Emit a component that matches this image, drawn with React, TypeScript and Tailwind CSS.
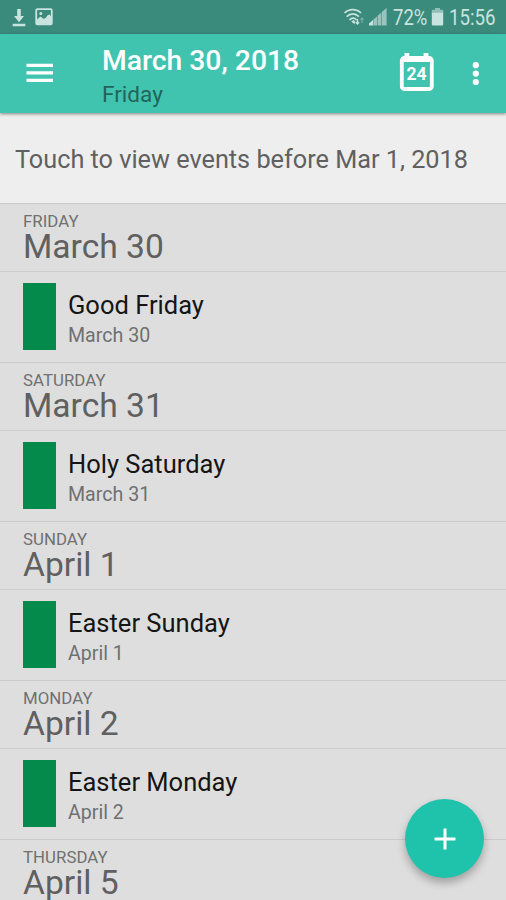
import React from "react";

const days = [
  { weekday: "FRIDAY", date: "March 30", event: "Good Friday" },
  { weekday: "SATURDAY", date: "March 31", event: "Holy Saturday" },
  { weekday: "SUNDAY", date: "April 1", event: "Easter Sunday" },
  { weekday: "MONDAY", date: "April 2", event: "Easter Monday" },
  { weekday: "THURSDAY", date: "April 5", event: "" },
];

function StatusBar() {
  return (
    <div className="flex h-[34px] shrink-0 items-center bg-[#3b8b7d] text-[#c9e3de]">
      <svg className="mt-px ml-3 h-[18px] w-[14px]" viewBox="0 0 14 18" fill="currentColor">
        <path d="M5.2 0h3.6v7H12l-5 6.2L2 7h3.2zM.7 14.8h12.6v2.4H.7z" />
      </svg>
      <svg className="ml-[9px] h-[18px] w-[18px]" viewBox="0 0 18 18">
        <rect x="1.2" y="1.2" width="15.6" height="15.2" rx="1.2" fill="none" stroke="currentColor" strokeWidth="1.8" />
        <path d="M2 11.4l3.4-2.8 3 2.2 2-.6 2.2-3 2-.6 2 2.4v7.2H2z" fill="currentColor" />
        <circle cx="5.8" cy="5.4" r="1.5" fill="currentColor" />
      </svg>
      <svg className="ml-[290px] h-[18px] w-[22px]" viewBox="0 0 22 18" fill="none" stroke="currentColor" strokeWidth="1.7">
        <path d="M1.5 5C6 .4 13.5 .4 18 5M3.7 8.7c3.6-3.8 8.6-3.8 12.2 0M6.5 12c2.2-2.4 5-2.4 7 0" />
        <path d="M10.4 12l-2 1.6 3 2.6 1-2.4z" fill="currentColor" stroke="none" />
        <path d="M14.5 11v5m-1.6-1.7l1.6 1.7 1.6-1.7" strokeWidth="1.4" />
        <path d="M19 15v-5m-1.6 1.7L19 10l1.6 1.7" strokeWidth="1.1" opacity=".45" />
      </svg>
      <svg className="ml-[4px] h-[18px] w-[18px]" viewBox="0 0 18 18" fill="currentColor">
        <path d="M0 17.5v-2l4-3.6v5.6z" />
        <path d="M4.4 11.4L8 8.4v9.1H4.4zM8.6 7.8l3.8-3.3v13H8.6zM13 3.8L17.6 0v17.5H13z" opacity=".65" />
      </svg>
      <span className="ml-[6px] w-[36px] origin-left scale-x-[.86] pt-[2px] text-[21.5px] leading-[32px] whitespace-nowrap">72%</span>
      <svg className="ml-[2px] h-[18px] w-[13px]" viewBox="0 0 13 18" fill="currentColor">
        <path d="M4 0h5v1.8h3.2v3.4H.8V1.8H4z" opacity=".6" />
        <path d="M.8 4.7h11.4v11.8q0 1-1 1H1.8q-1 0-1-1z" />
      </svg>
      <span className="ml-[5px] w-[48px] origin-left scale-x-[.87] pt-[2px] text-[21.5px] leading-[32px] whitespace-nowrap">15:56</span>
    </div>
  );
}

function AppBar() {
  return (
    <div className="z-10 flex h-[79px] shrink-0 bg-[#40c4b0] shadow-[0_1px_3px_rgba(0,0,0,0.45)]">
      <svg className="mt-[28px] ml-[26px] h-[22px] w-[28px]" viewBox="0 0 28 22" fill="white">
        <path d="M.5 1.7h26.5v3.2H.5zM.5 9.2h26.5v3.2H.5zM.5 16.8h26.5V20H.5z" />
      </svg>
      <div className="ml-[48px] w-[294px]">
        <h1 className="mt-[11px] text-[28.3px] leading-[32px] font-medium whitespace-nowrap text-white">March 30, 2018</h1>
        <p className="text-[22.6px] leading-[36px] text-[#20645b]">Friday</p>
      </div>
      <svg className="mt-[18px] ml-[3px] h-[40px] w-[36px]" viewBox="0 0 36 40">
        <path d="M5.5 1h4.8v4H5.5zM24.6 1h4.8v4h-4.8z" fill="white" />
        <rect x="2.8" y="6" width="30" height="31" rx="2.5" fill="none" stroke="white" strokeWidth="3.8" />
        <path d="M2 5h31v5H2z" fill="white" />
        <text x="17.6" y="28" textAnchor="middle" fill="white" fontFamily="Roboto, sans-serif" fontWeight="700" fontSize="17.5">24</text>
      </svg>
      <svg className="mt-[27px] ml-[36px] h-[26px] w-[10px]" viewBox="0 0 10 26" fill="white">
        <circle cx="4.8" cy="4.2" r="3.1" />
        <circle cx="4.8" cy="12.6" r="3.1" />
        <circle cx="4.8" cy="21" r="3.1" />
      </svg>
    </div>
  );
}

export default function App() {
  return (
    <div className="relative flex h-[900px] w-[506px] flex-col overflow-hidden bg-[#dedede] font-['Roboto',sans-serif]">
      <StatusBar />
      <AppBar />
      <div className="h-[90px] shrink-0 bg-[#eeeeee] pt-px pl-[15px] text-[25.25px] leading-[92px] whitespace-nowrap text-[#606060]">
        Touch to view events before Mar 1, 2018
      </div>
      {days.map((day) => (
        <div key={day.date} className="h-[159px] shrink-0">
          <div className="h-[68px] border-t border-[#cbcbcb] pt-[7px] pl-[23px]">
            <p className="text-[16.8px] leading-[20px] tracking-[0.05px] text-[#707070]">{day.weekday}</p>
            <h2 className="text-[33.6px] leading-[32px] text-[#606060]">{day.date}</h2>
          </div>
          {day.event && (
            <div className="flex h-[91px] border-t border-[#cdcdcd] pl-[23px]">
              <div className="mt-[11px] h-[67px] w-[33px] bg-[#048a4b]" />
              <div className="ml-[12px] pt-[17px]">
                <h3 className="text-[25.5px] leading-[32px] text-[#151515]">{day.event}</h3>
                <p className="text-[19.6px] leading-[30px] text-[#707070]">{day.date}</p>
              </div>
            </div>
          )}
        </div>
      ))}
      <button className="absolute top-[799px] left-[405px] flex h-[79px] w-[79px] items-center justify-center rounded-full bg-[#1fc3ac] shadow-[0_5px_8px_rgba(0,0,0,0.28)]">
        <svg className="h-[22px] w-[22px]" viewBox="0 0 22 22" fill="none" stroke="white" strokeWidth="3">
          <path d="M11 .5v21M.5 11h21" />
        </svg>
      </button>
    </div>
  );
}
